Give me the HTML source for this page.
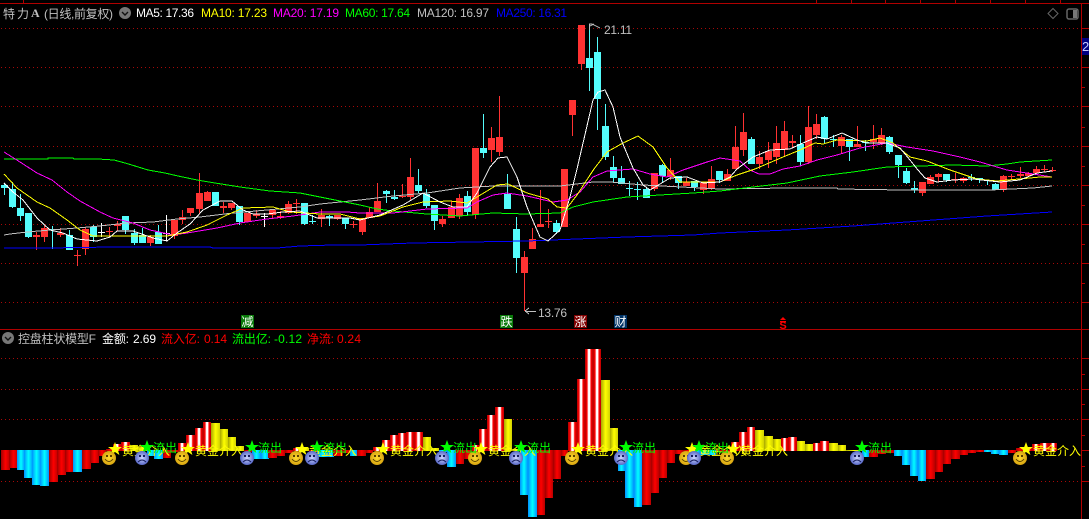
<!DOCTYPE html>
<html lang="zh"><head><meta charset="utf-8"><title>K</title>
<style>
html,body{margin:0;padding:0;background:#000;width:1089px;height:519px;overflow:hidden}
svg{display:block}
text{font-family:"Liberation Sans","WenQuanYi Zen Hei","Noto Sans CJK SC",sans-serif;font-size:12px}
.r{fill:url(#gr)}.c{fill:url(#gc)}.s{fill:url(#gs)}.y{fill:url(#gy)}
.ty{fill:#ff0;font-size:12px}.tg{fill:#0f0;font-size:12px}
</style></head><body>
<svg width="1089" height="519" viewBox="0 0 1089 519" xmlns="http://www.w3.org/2000/svg">
<defs>
<linearGradient id="gr"><stop offset="0" stop-color="#a00000"/><stop offset=".5" stop-color="#f00"/><stop offset="1" stop-color="#b80000"/></linearGradient>
<linearGradient id="gc"><stop offset="0" stop-color="#0090ff"/><stop offset=".5" stop-color="#0ff"/><stop offset="1" stop-color="#0090ff"/></linearGradient>
<linearGradient id="gs"><stop offset="0" stop-color="#b00000"/><stop offset=".25" stop-color="#f00"/><stop offset=".42" stop-color="#fff"/><stop offset=".6" stop-color="#fff"/><stop offset=".75" stop-color="#f00"/><stop offset="1" stop-color="#b80000"/></linearGradient>
<linearGradient id="gy"><stop offset="0" stop-color="#a8a800"/><stop offset=".5" stop-color="#ff0"/><stop offset="1" stop-color="#d0d000"/></linearGradient>
<radialGradient id="gf"><stop offset="0" stop-color="#ffdc30"/><stop offset="1" stop-color="#d8a410"/></radialGradient>
<radialGradient id="gb"><stop offset="0" stop-color="#d0d8ff"/><stop offset="1" stop-color="#5868c8"/></radialGradient>
<g id="sm"><circle r="7" fill="url(#gf)"/><rect x="-3" y="-3" width="2" height="2" fill="#5a4000"/><rect x="1" y="-3" width="2" height="2" fill="#5a4000"/><path d="M-4 1Q0 6 4 1" fill="none" stroke="#5a4000"/></g>
<g id="sd"><circle r="7" fill="url(#gb)"/><rect x="-3" y="-3" width="2" height="2" fill="#182060"/><rect x="1" y="-3" width="2" height="2" fill="#182060"/><path d="M-4 4Q0 0 4 4" fill="none" stroke="#182060"/></g>
<polygon id="st" points="0,-7 1.8,-2 7,-2 2.9,1 4.4,6 0,3 -4.4,6 -2.9,1 -7,-2 -1.8,-2"/>
</defs>
<rect width="1089" height="519" fill="#000"/>

<!-- frame -->
<g stroke="#b00000" shape-rendering="crispEdges" fill="none">
<path d="M0 3.5H1089M0 329.5H1089M1081.5 3V519M23.5 0V3M816.5 0V3M851.5 0V3M885.5 0V3M920.5 0V3M955.5 0V3M990.5 0V3M1025.5 0V3M1060.5 0V3"/>
<path d="M1081 28.5H1089M1081 67.5H1089M1081 106.5H1089M1081 146.5H1089M1081 185.5H1089M1081 224.5H1089M1081 263.5H1089M1081 302.5H1089M1081 87.5H1085M1081 127.5H1085M1081 166.5H1085M1081 205.5H1085M1081 244.5H1085M1081 283.5H1085M1081 358.5H1089M1081 389.5H1089M1081 419.5H1089M1081 450.5H1089M1081 481.5H1089M1081 374.5H1085M1081 404.5H1085M1081 435.5H1085M1081 466.5H1085"/>
<path stroke="#a80808" stroke-dasharray="1 3" d="M1 28.5H1081M1 67.5H1081M1 106.5H1081M1 146.5H1081M1 185.5H1081M1 224.5H1081M1 263.5H1081M1 302.5H1081M1 358.5H1081M1 389.5H1081M1 419.5H1081M1 481.5H1081"/>
</g>
<rect x="1082" y="38" width="7" height="17" fill="#000080"/>
<text x="1082" y="51" fill="#c8c8ff" style="font-size:13px">2</text>

<!-- candles -->
<g shape-rendering="crispEdges" fill="none">
<path stroke="#ff3232" d="M36.5 232V250M44.5 226V242M60.5 228V237M77.5 250V266M85.5 227V255M109.5 227V237M117.5 221V231M150.5 235V246M174.5 219V239M182.5 210V224M190.5 208V216M199.5 173V214M207.5 191V201M223.5 202V213M231.5 203V210M247.5 213V222M256.5 210V218M272.5 209V219M280.5 211V219M288.5 201V214M296.5 199V214M321.5 209V227M337.5 215V220M353.5 221V228M362.5 218V235M369.5 207V218M377.5 183V212M402.5 184V198M410.5 158V200M442.5 216V227M451.5 201V218M459.5 194V219M475.5 148V219M491.5 127V162M499.5 96V156M524.5 251V311M532.5 228V249M540.5 190V227M548.5 209V228M564.5 169V227M572.5 100V136M581.5 25V70M654.5 173V191M670.5 158V180M686.5 178V186M703.5 183V194M711.5 166V190M727.5 169V181M735.5 126V169M743.5 113V156M759.5 151V169M768.5 142V168M776.5 126V164M784.5 121V156M792.5 135V148M808.5 106V164M816.5 114V139M841.5 135V153M857.5 126V147M873.5 125V149M881.5 128V145M922.5 182V196M930.5 175V184M938.5 173V182M955.5 173V183M963.5 177V183M1003.5 175V192M1011.5 174V179M1020.5 167V178M1028.5 172V177M1036.5 166V175M1044.5 165V172M1052.5 167V172"/>
<path stroke="#ff3232" stroke-width="7" d="M36.5 235V237M44.5 228V237M60.5 233V235M77.5 255V256M85.5 229V249M109.5 231V232M117.5 224V226M150.5 237V243M174.5 220V236M182.5 217V220M190.5 208V213M199.5 193V209M207.5 192V201M223.5 206V208M231.5 203V208M247.5 213V222M256.5 214V216M272.5 210V215M280.5 216V218M288.5 204V213M296.5 203V204M321.5 215V219M337.5 215V219M353.5 224V225M362.5 218V232M369.5 212V218M377.5 201V212M402.5 196V197M410.5 177V197M442.5 219V224M451.5 207V218M459.5 198V216M475.5 148V215M491.5 138V150M499.5 137V152M524.5 257V273M532.5 239V249M540.5 224V227M548.5 221V222M564.5 169V227M572.5 100V115M581.5 25V64M654.5 173V189M670.5 170V177M686.5 182V186M703.5 183V190M711.5 179V188M727.5 174V181M735.5 147V169M743.5 132V150M759.5 157V164M768.5 151V160M776.5 143V157M784.5 131V150M792.5 141V143M808.5 127V162M816.5 124V135M841.5 137V146M857.5 144V147M873.5 139V142M881.5 135V143M922.5 182V193M930.5 177V184M938.5 174V177M955.5 179V180M963.5 178V181M1003.5 176V190M1011.5 176V177M1020.5 174V176M1028.5 173V176M1036.5 169V173M1044.5 169V170M1052.5 170V171"/>
<path stroke="#54fcfc" d="M4.5 183V195M12.5 182V208M20.5 194V221M28.5 213V238M52.5 226V249M69.5 230V250M93.5 225V242M125.5 216V234M134.5 229V245M142.5 228V243M158.5 225V244M215.5 192V206M239.5 206V225M304.5 203V225M312.5 215V224M329.5 215V226M345.5 218V229M386.5 190V203M394.5 190V200M418.5 169V193M426.5 189V208M434.5 205V230M467.5 191V215M483.5 114V158M507.5 174V209M516.5 217V273M556.5 220V234M589.5 24V91M597.5 37V130M605.5 104V160M613.5 156V182M621.5 166V184M629.5 181V196M637.5 182V200M646.5 187V198M662.5 164V182M678.5 176V189M694.5 181V191M719.5 171V183M751.5 137V164M800.5 135V166M824.5 116V144M833.5 135V147M849.5 139V161M865.5 140V151M889.5 136V154M898.5 155V178M906.5 168V184M914.5 181V193M946.5 174V182M971.5 174V181M979.5 178V183M987.5 180V185M995.5 183V190"/>
<path stroke="#54fcfc" stroke-width="7" d="M4.5 185V188M12.5 189V207M20.5 208V216M28.5 213V237M52.5 229V230M69.5 235V250M93.5 227V237M125.5 216V230M134.5 233V243M142.5 235V243M158.5 232V244M215.5 192V206M239.5 206V222M304.5 203V224M312.5 221V222M329.5 216V218M345.5 218V224M386.5 191V194M394.5 197V199M418.5 185V191M426.5 194V206M434.5 205V221M467.5 196V212M483.5 148V153M507.5 194V209M516.5 229V258M556.5 223V232M589.5 58V68M597.5 52V99M605.5 126V157M613.5 167V178M621.5 178V184M629.5 188V189M637.5 189V190M646.5 189V198M662.5 165V176M678.5 176V183M694.5 181V187M719.5 171V180M751.5 139V164M800.5 144V162M824.5 117V139M833.5 139V140M849.5 139V147M865.5 142V143M889.5 137V152M898.5 155V165M906.5 171V183M914.5 188V190M946.5 174V180M971.5 177V178M979.5 178V180M987.5 180V181M995.5 184V190"/>
<path stroke="#fff" d="M101.5 223V237M166.5 215V241M264.5 213V227"/>
<path stroke="#fff" stroke-width="7" d="M101.5 232V233M166.5 233V234M264.5 216V217"/>
</g>

<!-- moving averages -->
<g fill="none" shape-rendering="crispEdges">
<polyline stroke="#0000ff" points="4,248 47,248 113,247 210,247 213,248 277,248 300,246 333,245 360,245 413,243 470,242 527,241 577,239 627,237 693,235 720,233 787,230 853,226 920,221 987,216 1052,212"/>
<polyline stroke="#c0c0c0" points="4,235 10,234 27,232 50,230 77,228 100,226 127,223 153,222 177,219 200,217 233,213 267,210 300,207 320,204 340,202 360,200 393,196 427,193 460,188 493,186 560,186 593,182 610,182 643,185 720,189 787,188 837,188 838,189 903,190 990,190 1033,188 1052,186"/>
<polyline stroke="#00ff00" points="4,159 48,159 48,158 73,158 74,159 98,159 114,160 125,163 135,166 148,170 165,173 178,176 197,180 215,183 240,187 270,191 300,193 320,197 340,201 360,205 377,209 393,211 427,214 460,216 493,213 527,214 560,213 573,207 593,202 627,197 660,195 693,193 720,191 753,187 787,183 820,176 853,172 887,167 920,166 953,165 987,166 1007,164 1020,162 1052,160"/>
<polyline stroke="#ff00ff" points="4,152 20,162 37,173 52,180 67,192 80,201 100,212 113,218 133,223 150,230 173,235 187,233 217,228 240,223 267,219 293,216 320,212 347,212 360,213 393,213 427,209 467,208 477,202 493,195 507,193 527,196 553,202 567,200 580,192 593,177 607,171 633,169 650,174 667,177 683,170 707,162 720,158 740,161 750,170 759,174 770,174 783,169 800,166 817,160 837,155 860,148 887,143 907,147 933,151 960,157 980,162 1007,170 1033,174 1052,177"/>
<polyline stroke="#ffff00" points="4,174 17,188 37,202 50,208 67,220 80,230 93,236 110,236 133,236 167,236 187,232 207,225 227,215 243,208 273,207 290,212 320,214 340,214 360,219 380,216 403,207 423,202 450,201 467,203 477,197 497,185 508,184 527,193 548,199 557,207 567,208 577,195 590,175 594,169 607,152 623,143 638,136 653,147 667,168 680,182 720,182 737,175 755,169 783,157 800,150 815,143 823,144 837,140 867,141 880,138 893,143 910,157 927,161 950,170 977,179 997,181 1030,178 1040,177 1052,177"/>
<polyline stroke="#ffffff" points="4,183 13,192 23,200 37,218 50,230 63,233 77,239 97,241 110,237 117,231 133,231 153,238 167,241 177,233 190,224 203,210 220,201 232,201 243,210 253,214 267,214 283,212 300,211 317,218 333,218 350,218 360,220 380,215 403,205 423,193 440,202 453,207 467,207 477,193 490,167 498,158 507,157 517,177 527,207 540,237 548,241 560,230 570,197 577,169 593,100 598,92 605,90 613,107 620,137 633,168 643,185 650,190 670,178 687,177 703,183 720,182 730,177 737,169 753,157 770,150 790,149 803,143 817,137 827,139 842,133 857,140 867,143 887,143 900,148 910,160 918,170 925,178 937,182 953,180 973,179 1000,182 1020,180 1037,173 1052,171"/>
</g>

<!-- high/low marks -->
<g fill="none" stroke="#c0c0c0" shape-rendering="crispEdges">
<path d="M589.5 30V24H592L600 28M590 26L594 24"/>
<path d="M525 311.5H536M525 311L529 308M525 311L529 314"/>
</g>
<text x="604" y="34" fill="#c0c0c0" textLength="28">21.11</text>
<text x="538" y="317" fill="#c0c0c0" textLength="29">13.76</text>

<!-- signal labels -->
<g shape-rendering="crispEdges">
<rect x="241" y="315" width="13" height="13" fill="#0a7a0a"/>
<rect x="500" y="315" width="13" height="13" fill="#0a7a0a"/>
<rect x="574" y="315" width="13" height="13" fill="#800000"/>
<rect x="614" y="315" width="13" height="13" fill="#003366"/>
</g>
<g fill="#fff" text-anchor="middle">
<text x="247.5" y="326">减</text><text x="506.5" y="326">跌</text><text x="580.5" y="326">涨</text><text x="620.5" y="326">财</text>
</g>
<path d="M783 317l3 3h-6z" fill="#f00"/><rect x="780" y="321" width="6" height="1" fill="#f00"/>
<text x="783" y="329" fill="#f00" text-anchor="middle" style="font-size:11px;font-weight:bold">S</text>

<!-- header 1 -->
<text x="3" y="18" fill="#c0c0c0">特</text>
<text x="17" y="18" fill="#c0c0c0">力</text>
<text x="31" y="17" fill="#c0c0c0" style="font-family:'Liberation Serif',serif;font-weight:bold;font-size:12px">A</text>
<text x="44" y="18" fill="#c0c0c0" textLength="69">(日线,前复权)</text>
<circle cx="125" cy="13" r="6" fill="#777"/><path d="M122 12l3 3 3-3" fill="none" stroke="#111" stroke-width="1.4"/>
<text x="136" y="17" fill="#fff" textLength="58">MA5: 17.36</text>
<text x="201" y="17" fill="#ff0" textLength="66">MA10: 17.23</text>
<text x="273" y="17" fill="#f0f" textLength="66">MA20: 17.19</text>
<text x="345" y="17" fill="#0f0" textLength="65">MA60: 17.64</text>
<text x="417" y="17" fill="#c0c0c0" textLength="72">MA120: 16.97</text>
<text x="496" y="17" fill="#00f" textLength="71">MA250: 16.31</text>
<path d="M1053 8.5l5 5-5 5-5-5z" fill="none" stroke="#666"/>
<rect x="1067" y="9" width="11" height="10" rx="2" fill="none" stroke="#666" stroke-width="1.5"/><rect x="1073" y="10" width="4" height="8" fill="#777"/>

<!-- header 2 -->
<circle cx="8" cy="338" r="6" fill="#777"/><path d="M5 337l3 3 3-3" fill="none" stroke="#111" stroke-width="1.4"/>
<text x="18" y="343" fill="#c0c0c0" textLength="78">控盘柱状模型F</text>
<text x="102" y="343" fill="#fff" textLength="27">金额:</text>
<text x="133" y="343" fill="#fff" textLength="23">2.69</text>
<text x="161" y="343" fill="#f00" textLength="39">流入亿:</text>
<text x="204" y="343" fill="#f00" textLength="23">0.14</text>
<text x="232" y="343" fill="#0f0" textLength="39">流出亿:</text>
<text x="274" y="343" fill="#0f0" textLength="28">-0.12</text>
<text x="307" y="343" fill="#f00" textLength="27">净流:</text>
<text x="337" y="343" fill="#f00" textLength="24">0.24</text>

<!-- volume bars -->
<g shape-rendering="crispEdges">
<rect class="r" x="1" y="450" width="9" height="20"/><rect class="r" x="9" y="450" width="9" height="18"/><rect class="c" x="17" y="450" width="8" height="20"/><rect class="c" x="24" y="450" width="9" height="28"/><rect class="c" x="32" y="450" width="9" height="35"/><rect class="c" x="40" y="450" width="9" height="36"/><rect class="r" x="49" y="450" width="9" height="32"/><rect class="r" x="57" y="450" width="9" height="25"/><rect class="r" x="65" y="450" width="9" height="22"/><rect class="c" x="73" y="450" width="9" height="22"/><rect class="r" x="82" y="450" width="9" height="19"/><rect class="r" x="90" y="450" width="9" height="13"/><rect class="r" x="98" y="450" width="8" height="6"/><rect class="r" x="106" y="449" width="8" height="2"/><rect class="s" x="113" y="444" width="8" height="7"/><rect class="s" x="121" y="442" width="9" height="9"/><rect class="y" x="130" y="445" width="8" height="6"/><rect class="y" x="138" y="447" width="9" height="4"/><rect class="c" x="147" y="450" width="8" height="6"/><rect class="c" x="154" y="450" width="9" height="9"/><rect class="r" x="163" y="450" width="8" height="8"/><rect class="r" x="171" y="450" width="8" height="2"/><rect class="s" x="178" y="443" width="8" height="8"/><rect class="s" x="186" y="435" width="9" height="16"/><rect class="s" x="195" y="428" width="8" height="23"/><rect class="s" x="203" y="422" width="8" height="29"/><rect class="y" x="211" y="423" width="9" height="28"/><rect class="y" x="220" y="429" width="8" height="22"/><rect class="y" x="228" y="437" width="8" height="14"/><rect class="y" x="236" y="446" width="8" height="5"/><rect class="r" x="244" y="450" width="8" height="2"/><rect class="c" x="252" y="450" width="9" height="9"/><rect class="c" x="261" y="450" width="8" height="9"/><rect class="r" x="268" y="450" width="9" height="8"/><rect class="r" x="277" y="450" width="8" height="6"/><rect class="r" x="285" y="450" width="8" height="3"/><rect class="s" x="293" y="448" width="8" height="3"/><rect class="y" x="301" y="448" width="8" height="3"/><rect class="r" x="309" y="450" width="8" height="2"/><rect class="c" x="317" y="450" width="12" height="7"/><rect class="c" x="328" y="450" width="6" height="7"/><rect class="r" x="333" y="450" width="10" height="6"/><rect class="r" x="343" y="450" width="7" height="3"/><rect class="c" x="350" y="450" width="7" height="6"/><rect class="r" x="357" y="450" width="9" height="6"/>
<rect class="r" x="366" y="450" width="7" height="3"/><rect class="s" x="373" y="447" width="9" height="4"/><rect class="s" x="382" y="440" width="8" height="11"/><rect class="s" x="390" y="435" width="8" height="16"/><rect class="s" x="398" y="433" width="8" height="18"/><rect class="s" x="406" y="432" width="8" height="19"/><rect class="s" x="414" y="432" width="9" height="19"/><rect class="y" x="423" y="437" width="8" height="14"/><rect class="y" x="431" y="448" width="8" height="3"/><rect class="c" x="439" y="450" width="8" height="2"/><rect class="c" x="447" y="450" width="9" height="17"/><rect class="r" x="456" y="450" width="8" height="14"/><rect class="r" x="464" y="450" width="8" height="9"/><rect class="s" x="472" y="445" width="7" height="6"/><rect class="s" x="479" y="429" width="8" height="22"/><rect class="s" x="487" y="415" width="8" height="36"/><rect class="s" x="495" y="407" width="9" height="44"/><rect class="y" x="504" y="419" width="8" height="32"/><rect class="y" x="512" y="449" width="8" height="2"/><rect class="c" x="520" y="450" width="8" height="45"/><rect class="c" x="528" y="450" width="9" height="67"/><rect class="r" x="537" y="450" width="8" height="65"/><rect class="r" x="545" y="450" width="8" height="48"/><rect class="r" x="553" y="450" width="8" height="29"/><rect class="r" x="561" y="450" width="7" height="6"/><rect class="s" x="568" y="422" width="9" height="29"/><rect class="s" x="577" y="379" width="8" height="72"/><rect class="s" x="585" y="349" width="8" height="102"/><rect class="s" x="593" y="349" width="8" height="102"/><rect class="y" x="601" y="380" width="9" height="71"/><rect class="y" x="610" y="428" width="8" height="23"/><rect class="c" x="618" y="450" width="7" height="21"/><rect class="c" x="625" y="450" width="9" height="48"/><rect class="c" x="634" y="450" width="8" height="57"/><rect class="r" x="642" y="450" width="9" height="55"/><rect class="r" x="651" y="450" width="8" height="43"/><rect class="r" x="659" y="450" width="8" height="28"/><rect class="r" x="667" y="450" width="8" height="13"/><rect class="r" x="675" y="450" width="8" height="4"/><rect class="r" x="683" y="450" width="10" height="2"/><rect class="c" x="693" y="450" width="7" height="5"/><rect class="c" x="700" y="450" width="8" height="5"/><rect class="c" x="708" y="450" width="8" height="5"/><rect class="r" x="716" y="450" width="15" height="2"/>
<rect class="s" x="731" y="442" width="8" height="9"/><rect class="s" x="739" y="432" width="8" height="19"/><rect class="s" x="747" y="427" width="8" height="24"/><rect class="y" x="755" y="430" width="9" height="21"/><rect class="y" x="764" y="436" width="9" height="15"/><rect class="y" x="773" y="439" width="8" height="12"/><rect class="s" x="781" y="438" width="7" height="13"/><rect class="s" x="788" y="437" width="9" height="14"/><rect class="y" x="797" y="441" width="8" height="10"/><rect class="y" x="805" y="444" width="8" height="7"/><rect class="s" x="813" y="443" width="7" height="8"/><rect class="s" x="820" y="441" width="9" height="10"/><rect class="y" x="829" y="443" width="9" height="8"/><rect class="y" x="838" y="445" width="8" height="6"/><rect class="y" x="846" y="450" width="16" height="1"/><rect class="c" x="862" y="450" width="7" height="7"/><rect class="r" x="869" y="450" width="9" height="7"/><rect class="r" x="878" y="450" width="8" height="4"/><rect class="r" x="886" y="450" width="8" height="3"/><rect class="c" x="894" y="450" width="8" height="6"/><rect class="c" x="902" y="450" width="8" height="15"/><rect class="c" x="910" y="450" width="8" height="26"/><rect class="c" x="918" y="450" width="8" height="31"/><rect class="r" x="926" y="450" width="9" height="29"/><rect class="r" x="935" y="450" width="8" height="22"/><rect class="r" x="943" y="450" width="8" height="14"/><rect class="r" x="951" y="450" width="9" height="9"/><rect class="r" x="960" y="450" width="8" height="5"/><rect class="r" x="968" y="450" width="8" height="3"/><rect class="r" x="976" y="450" width="8" height="2"/><rect class="c" x="984" y="450" width="7" height="2"/><rect class="c" x="991" y="450" width="8" height="4"/><rect class="c" x="999" y="450" width="9" height="5"/><rect class="r" x="1008" y="450" width="8" height="3"/><rect class="r" x="1016" y="448" width="8" height="3"/><rect class="s" x="1024" y="448" width="8" height="3"/><rect class="s" x="1032" y="444" width="8" height="7"/><rect class="s" x="1040" y="443" width="9" height="8"/><rect class="s" x="1049" y="443" width="8" height="8"/>
</g>

<!-- yellow signals -->
<g class="ty">
<text class="ty" x="122" y="455" textLength="48">黄金介入</text><text class="ty" x="195" y="455" textLength="48">黄金介入</text><text class="ty" x="309" y="455" textLength="48">黄金介入</text><text class="ty" x="390" y="455" textLength="48">黄金介入</text><text class="ty" x="488" y="455" textLength="48">黄金介入</text><text class="ty" x="585" y="455" textLength="48">黄金介入</text><text class="ty" x="699" y="455" textLength="48">黄金介入</text><text class="ty" x="740" y="455" textLength="48">黄金介入</text><text class="ty" x="1033" y="455" textLength="48">黄金介入</text>
</g>
<g fill="#ff0">
<use href="#st" x="115" y="449"/><use href="#st" x="188" y="449"/><use href="#st" x="302" y="449"/><use href="#st" x="383" y="449"/><use href="#st" x="481" y="449"/><use href="#st" x="578" y="449"/><use href="#st" x="692" y="449"/><use href="#st" x="733" y="449"/><use href="#st" x="1026" y="449"/>
</g>
<use href="#sm" x="109" y="458"/><use href="#sm" x="182" y="458"/><use href="#sm" x="296" y="458"/><use href="#sm" x="377" y="458"/><use href="#sm" x="475" y="458"/><use href="#sm" x="572" y="458"/><use href="#sm" x="686" y="458"/><use href="#sm" x="727" y="458"/><use href="#sm" x="1020" y="458"/>

<!-- green signals -->
<text class="tg" x="153" y="452" textLength="24">流出</text><text class="tg" x="258" y="452" textLength="24">流出</text><text class="tg" x="323" y="452" textLength="24">流出</text><text class="tg" x="453" y="452" textLength="24">流出</text><text class="tg" x="527" y="452" textLength="24">流出</text><text class="tg" x="632" y="452" textLength="24">流出</text><text class="tg" x="705" y="452" textLength="24">流出</text><text class="tg" x="868" y="452" textLength="24">流出</text>
<g fill="#0f0">
<use href="#st" x="147" y="447"/><use href="#st" x="252" y="447"/><use href="#st" x="317" y="447"/><use href="#st" x="447" y="447"/><use href="#st" x="521" y="447"/><use href="#st" x="626" y="447"/><use href="#st" x="699" y="447"/><use href="#st" x="862" y="447"/>
</g>
<use href="#sd" x="142" y="458"/><use href="#sd" x="247" y="458"/><use href="#sd" x="312" y="458"/><use href="#sd" x="442" y="458"/><use href="#sd" x="516" y="458"/><use href="#sd" x="621" y="458"/><use href="#sd" x="694" y="458"/><use href="#sd" x="857" y="458"/>
</svg>
</body></html>
